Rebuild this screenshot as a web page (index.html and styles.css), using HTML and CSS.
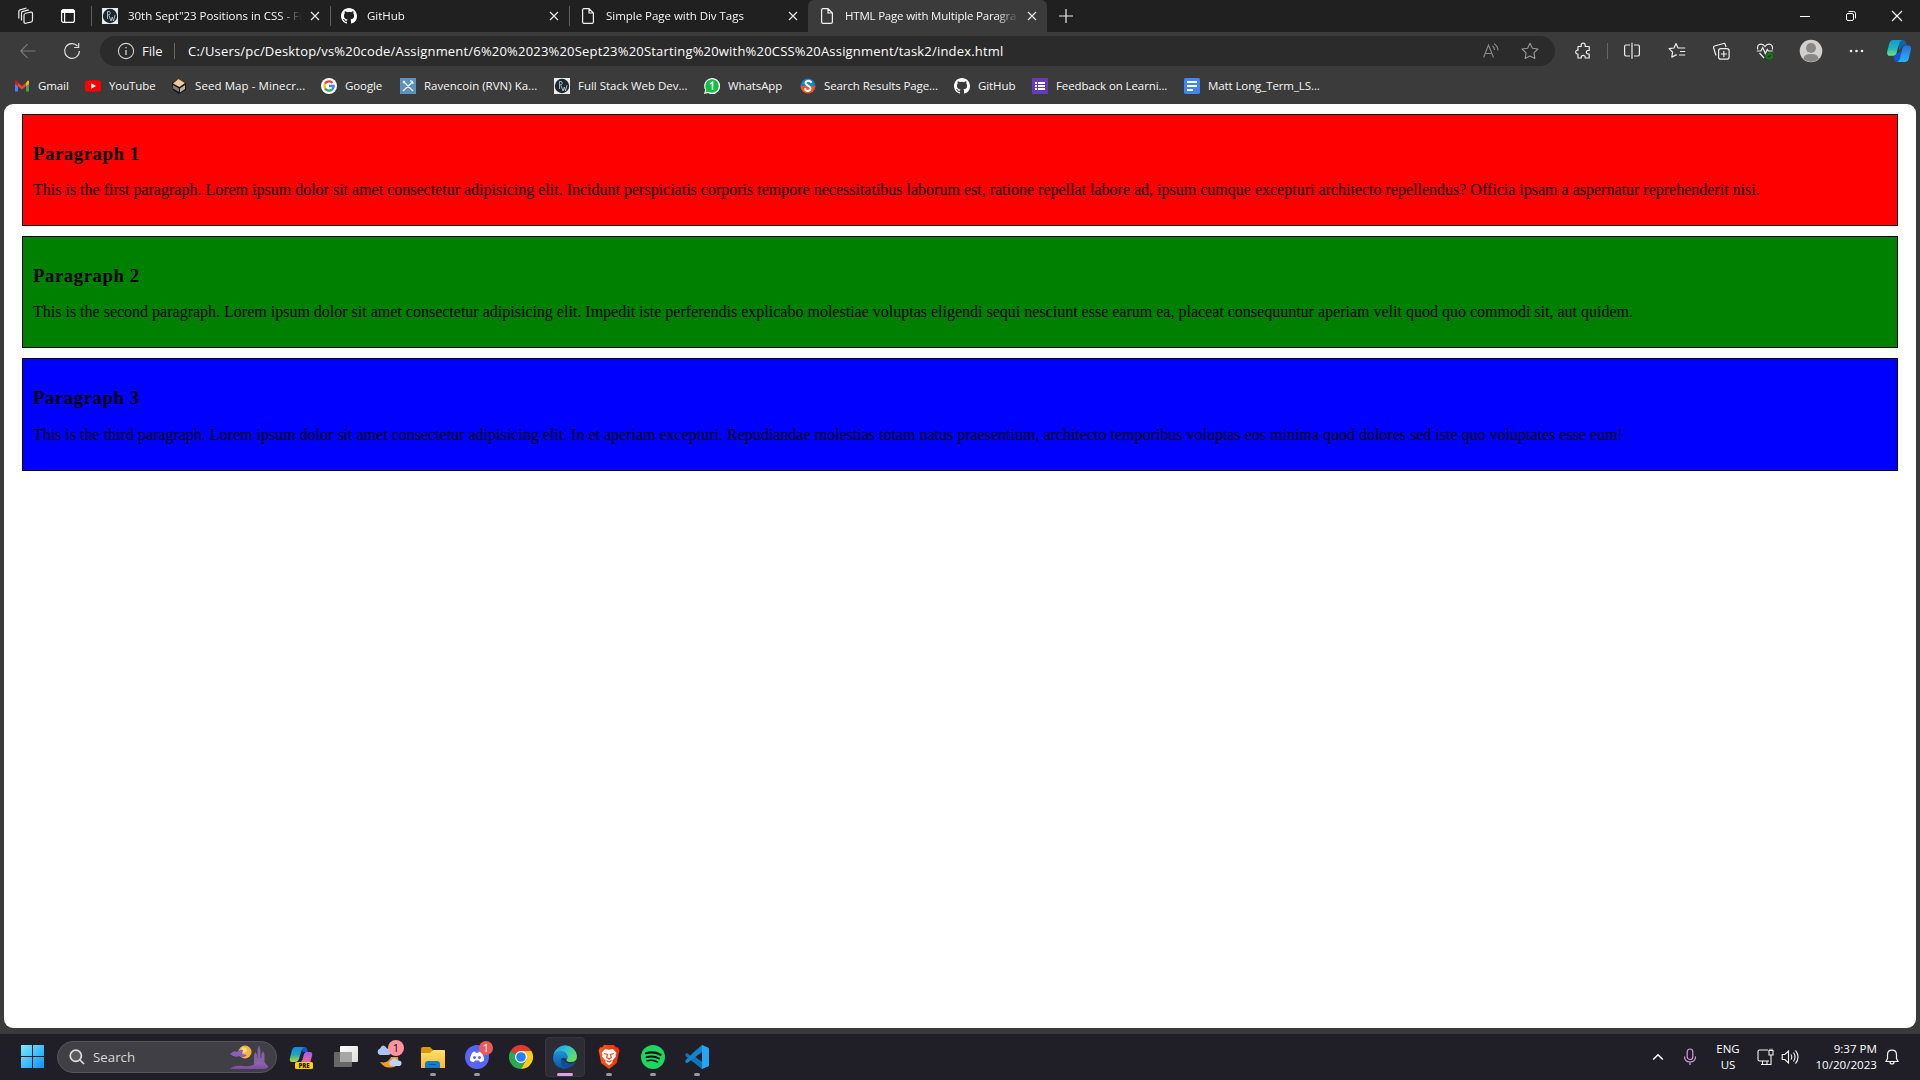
FILE: index.html
```html
<!DOCTYPE html>
<html lang="en">
<head>
<meta charset="utf-8">
<title>HTML Page with Multiple Paragraphs</title>
<link rel="stylesheet" href="styles.css">
</head>
<body>
<svg class="defs" width="0" height="0">
  <defs>
    <symbol id="close" viewBox="0 0 10 10"><path d="M1 1l8 8M9 1L1 9" fill="none" stroke="#e8e8e8" stroke-width="1.2"/></symbol>
    <symbol id="github" viewBox="0 0 16 16"><path fill="#fff" d="M8 0C3.58 0 0 3.58 0 8c0 3.54 2.29 6.53 5.47 7.59.4.07.55-.17.55-.38 0-.19-.01-.82-.01-1.49-2.01.37-2.53-.49-2.69-.94-.09-.23-.48-.94-.82-1.13-.28-.15-.68-.52-.01-.53.63-.01 1.08.58 1.23.82.72 1.21 1.87.87 2.33.66.07-.52.28-.87.51-1.07-1.78-.2-3.64-.89-3.64-3.95 0-.87.31-1.59.82-2.15-.08-.2-.36-1.02.08-2.12 0 0 .67-.21 2.2.82a7.6 7.6 0 0 1 4 0c1.53-1.04 2.2-.82 2.2-.82.44 1.1.16 1.92.08 2.12.51.56.82 1.27.82 2.15 0 3.07-1.87 3.75-3.65 3.95.29.25.54.73.54 1.48 0 1.07-.01 1.93-.01 2.2 0 .21.15.46.55.38A8 8 0 0 0 16 8c0-4.42-3.58-8-8-8z"/></symbol>
    <symbol id="pw" viewBox="0 0 16 16"><path fill="#e9eded" d="M0 0h16v16H0z"/><circle cx="8" cy="8" r="7.2" fill="#1d2730"/><path d="M5.500 11V3.500q3-.5 2.800 1.800Q8 7 6 6.800M7 7.500l2 5.500 1.300-4 1.200 4 1.500-6" fill="none" stroke="#b9c4c8" stroke-width=".9"/></symbol>
    <symbol id="doc" viewBox="0 0 12 16"><path d="M2 .6h5l4.400 4.400v9q0 1.400-1.400 1.400H2Q.6 15.400.6 14V2Q.6.6 2 .6zM7 .8V5h4.200" fill="none" stroke="#f2f2f2" stroke-width="1.200"/></symbol>
  </defs>
</svg>

<header class="tabs">
  <div class="tabs-tools">
    <svg width="18" height="18" viewBox="0 0 18 18" fill="none" stroke="#eee" stroke-width="1.200"><rect x="7" y="5.500" width="8.500" height="10" rx="1.800" transform="skewY(-12) translate(0 2.600)"/><path d="M4.500 13.500V6.200q0-1.400 1.300-1.800l6-1.600M1.800 11.600V4.600q0-1.400 1.300-1.800L9.500 1"/></svg>
    <svg width="16" height="16" viewBox="0 0 16 16" fill="none" stroke="#fff" stroke-width="1.200"><rect x="1.600" y="1.600" width="12.800" height="12.800" rx="2"/><path d="M1.600 3.500h12.800" stroke-width="3"/><path d="M4.600 5v9.400"/></svg>
  </div>
  <div class="tab"><svg width="16" height="16"><use href="#pw"/></svg><span class="tab-title">30th Sept"23 Positions in CSS - Fu</span><svg width="10" height="10"><use href="#close"/></svg></div>
  <div class="tab"><svg width="16" height="16"><use href="#github"/></svg><span class="tab-title">GitHub</span><svg width="10" height="10"><use href="#close"/></svg></div>
  <div class="tab"><svg width="16" height="16"><use href="#doc"/></svg><span class="tab-title">Simple Page with Div Tags</span><svg width="10" height="10"><use href="#close"/></svg></div>
  <div class="tab active"><svg width="16" height="16"><use href="#doc"/></svg><span class="tab-title long">HTML Page with Multiple Paragra</span><svg width="10" height="10"><use href="#close"/></svg></div>
  <svg class="plus" width="14" height="14" viewBox="0 0 14 14"><path d="M7 0v14M0 7h14" stroke="#eee" stroke-width="1.200"/></svg>
  <div class="window-buttons">
    <svg width="46" height="32" viewBox="0 0 46 32"><path d="M18 16.500h10" stroke="#fff"/></svg>
    <svg width="46" height="32" viewBox="0 0 46 32" fill="none" stroke="#fff"><rect x="18.500" y="13.500" width="7" height="7" rx="1.500"/><path d="M20.500 11.500h5q2 0 2 2v5"/></svg>
    <svg width="46" height="32" viewBox="0 0 46 32"><path d="M18 11l10 10M28 11L18 21" stroke="#fff" stroke-width="1.100"/></svg>
  </div>
</header>

<nav class="toolbar">
  <svg class="back" width="16" height="16" viewBox="0 0 16 16" fill="none" stroke="#7b7b7b" stroke-width="1.100"><path d="M15.500 8H1M7.500 1.200L.8 8l6.700 6.800"/></svg>
  <svg class="reload" width="18" height="18" viewBox="0 0 18 18" fill="none" stroke="#ddd" stroke-width="1.200"><path d="M16.400 9A7.400 7.400 0 1 1 14.500 4M15.700 1v4.500h-4.600"/></svg>
  <div class="address">
    <svg width="18" height="18" viewBox="0 0 18 18" fill="none" stroke="#d0d0d0" stroke-width="1.100"><circle cx="9" cy="9" r="7.600"/><path d="M9 8v5M9 5v1.300" stroke-width="1.300"/></svg>
    <span class="scheme">File</span><i class="rule"></i>
    <span class="url">C:/Users/pc/Desktop/vs%20code/Assignment/6%20%2023%20Sept23%20Starting%20with%20CSS%20Assignment/task2/index.html</span>
    <svg class="aloud" width="16" height="16" viewBox="0 0 16 16" fill="none" stroke="#8a8a8a" stroke-width="1.100"><path d="M.6 14.500L5.500 2l5 12.500M2.400 10.500H9M9.500 3q2 1.500 2 4M11 .8q4 2.500 4 6.700"/></svg>
    <svg width="18" height="18" viewBox="0 0 18 18" fill="none" stroke="#999" stroke-width="1.100"><path d="M9 1.200l2.400 5 5.500.8-4 3.900 1 5.600L9 13.900l-4.900 2.600 1-5.600-4-3.900 5.500-.8z" stroke-linejoin="round"/></svg>
  </div>
  <div class="tools">
    <svg width="18" height="18" viewBox="0 0 18 18" fill="none" stroke="#eee" stroke-width="1.200"><path d="M4 4.500h3.200V3.200a2 2 0 0 1 4 0v1.300h4v4h-1.100a1.700 1.700 0 0 0 0 3.500h1.100v4h-4v-.7a1.900 1.900 0 0 0-3.900 0v.7H4v-4H3a2 2 0 0 1 0-3.800h1z" stroke-linejoin="round"/></svg>
    <i class="rule"></i>
    <svg width="18" height="18" viewBox="0 0 18 18" fill="none" stroke="#eee" stroke-width="1.200"><path d="M7 3H3Q1.600 3 1.600 4.400v8.200Q1.600 14 3 14h4M11 3h4q1.400 0 1.400 1.400v8.200Q16.400 14 15 14h-4M9 .8v16"/></svg>
    <svg width="18" height="18" viewBox="0 0 18 18" fill="none" stroke="#eee" stroke-width="1.200"><path d="M10.500 6h6.700M12 9.500h5.200M11 13h6.200M10.500 6H10L8 1.500 6 6l-4.900.7 3.500 3.500-.8 5 4.200-2.300.8.400" stroke-linejoin="round"/></svg>
    <svg width="18" height="18" viewBox="0 0 18 18" fill="none" stroke="#eee" stroke-width="1.200"><rect x="6.600" y="6.600" width="10.500" height="10.500" rx="2.200"/><path d="M11.850 9v6M8.850 12h6M14 5l-.8-2.600q-.4-1.200-1.600-.9L2.500 4q-1.300.4-.9 1.700L4 13.500"/></svg>
    <svg width="18" height="18" viewBox="0 0 18 18" fill="none" stroke="#eee" stroke-width="1.200"><path d="M1.600 7.500Q.9 2.200 5 2.200q2.500 0 4 2.300 1.500-2.300 4-2.300 4.100 0 3.400 5.300M.8 9h4l2-3.500 2.500 6 2-4 1 1.500h4.500M3.500 11L8 16"/><circle cx="13.500" cy="14" r="3.600" fill="#127c12" stroke="none"/><path d="M12 14l1 1 2-2" stroke="#073f07"/></svg>
    <svg width="24" height="24" viewBox="0 0 24 24"><circle cx="12" cy="12" r="11.300" fill="#d2d0ce"/><circle cx="12" cy="9" r="5" fill="#8a8886"/><path d="M4.500 20q0-5 7.500-5t7.500 5Q16 23 12 23t-7.500-3z" fill="#8a8886"/></svg>
    <svg width="18" height="18" viewBox="0 0 18 18" fill="#eee"><circle cx="4" cy="9" r="1.300"/><circle cx="9.500" cy="9" r="1.300"/><circle cx="15" cy="9" r="1.300"/></svg>
    <svg width="24" height="24" viewBox="0 0 24 24"><defs><linearGradient id="ca" x2="0" y2="1"><stop stop-color="#0c9ddb"/><stop offset=".55" stop-color="#22b6b8"/><stop offset="1" stop-color="#6ee67a"/></linearGradient><linearGradient id="cb" x2="0" y2="1"><stop stop-color="#2a6fdc"/><stop offset="1" stop-color="#20b7fb"/></linearGradient></defs><path d="M12 1h4q2 0 2.600 2l1 3.500H16L12 12z" fill="#0a68a8"/><path d="M6 14h5l3-2v7q-.6 4-3 4H9.500Q7.600 23 7 20z" fill="#1855c8"/><path d="M6 1h9q-2 .5-2.800 3.500L9.500 14q-.8 2.800-3.500 2.800H3Q-.6 16.800.3 12l2-7.500Q3.400 1 6 1z" fill="url(#ca)"/><path d="M18 23H10q2.200-.7 3-3.500L15.200 10q.8-3.500 3.500-3.500h2.500q3.600 0 2.600 4.500l-2 8.500Q20.700 23 18 23z" fill="url(#cb)"/></svg>
  </div>
</nav>

<nav class="bookmarks">
  <a class="w1"><svg width="16" height="16" viewBox="0 0 16 16"><path d="M1 4v9.500h3V7" fill="#4285f4"/><path d="M12 7v6.500h3V4" fill="#34a853"/><path d="M1 2.500L8 8l7-5.500V6l-7 5.500L1 6z" fill="#ea4335"/><path d="M12 5l1.500-2.300Q15 2 15 4v2l-3 2z" fill="#fbbc04"/><path d="M1 6V3.500q.5-1.500 2-.6l1 .9V8z" fill="#c5221f"/></svg><span>Gmail</span></a>
  <a class="w2"><svg width="16" height="16" viewBox="0 0 16 16"><rect y="2.200" width="16" height="11.600" rx="3" fill="#f00"/><path d="M6.300 5.300v5.400L11 8z" fill="#fff"/></svg><span>YouTube</span></a>
  <a class="w3"><svg width="16" height="16" viewBox="0 0 16 16"><path d="M1 5l7-4 7 4v7l-7 4-6-4z" fill="#181510"/><path d="M2 5.500L7.500 1 14 5 8.500 9z" fill="#f6c896"/><path d="M2 7l6 3.500V14l-6-3.500z" fill="#777d82"/><path d="M9 10.500L14 7v4l-5 3.500z" fill="#b7b1a7"/></svg><span>Seed Map - Minecr...</span></a>
  <a class="w4"><svg width="16" height="16" viewBox="0 0 16 16"><circle cx="8" cy="8" r="8" fill="#fff"/><g fill="none" stroke-width="2.300"><path d="M4 5.700A4.700 4.700 0 0 1 11.500 4.900" stroke="#ea4335"/><path d="M4 5.700a4.700 4.700 0 0 0 0 4.600" stroke="#fbbc05"/><path d="M4 10.300a4.700 4.700 0 0 0 7 1.300" stroke="#34a853"/><path d="M11 11.600A4.700 4.700 0 0 0 12.700 8H8" stroke="#4285f4"/></g></svg><span>Google</span></a>
  <a class="w5"><svg width="16" height="16" viewBox="0 0 16 16"><path d="M0 0h16v16H0z" fill="#5e92bd"/><path d="M3 3l10 10M12.500 4L3 13M10 3q3-.5 3 3M3 5l2-2" fill="none" stroke="#e4eff6" stroke-width="1.300"/></svg><span>Ravencoin (RVN) Ka...</span></a>
  <a class="w6"><svg width="16" height="16"><use href="#pw"/></svg><span>Full Stack Web Dev...</span></a>
  <a class="w7"><svg width="16" height="16" viewBox="0 0 16 16"><path d="M0 16l1.200-4A8 8 0 1 1 4 14.900z" fill="#fff"/><circle cx="8" cy="8" r="6.800" fill="#12c143"/><path d="M1.500 14.500l1-3.500L5 13.600z" fill="#12c143"/><path d="M6 5.800L8.500 4.300V12" fill="none" stroke="#fff" stroke-width="1.500"/></svg><span>WhatsApp</span></a>
  <a class="w8"><svg width="16" height="16" viewBox="0 0 16 16"><path d="M.5 8a7.500 7.500 0 0 1 15 0z" fill="#1682c7"/><path d="M.5 8a7.500 7.500 0 0 0 15 0z" fill="#ee5526"/><path d="M10.800 5V3.800Q8 1.700 5.700 4q-.7 2 2.300 3.700 3.700 2 2 4.300-2.300 2-4.700-.3V10" fill="none" stroke="#fff" stroke-width="2"/></svg><span>Search Results Page...</span></a>
  <a class="w9"><svg width="16" height="16"><use href="#github"/></svg><span>GitHub</span></a>
  <a class="w10"><svg width="16" height="16" viewBox="0 0 16 16"><rect width="16" height="16" rx=".8" fill="#673ab7"/><path d="M3 5h2M3 8h2M3 11h2M6 5h7M6 8h7M6 11h7" stroke="#fff" stroke-width="1.800"/></svg><span>Feedback on Learni...</span></a>
  <a class="w11"><svg width="16" height="16" viewBox="0 0 16 16"><rect width="16" height="16" rx="1.800" fill="#4285f4"/><path d="M3 4h10M3 8h10M3 12h6" stroke="#fff" stroke-width="2"/></svg><span>Matt Long_Term_LS...</span></a>
</nav>

<div class="frame">
  <main class="page">
    <div class="para red"><h3>Paragraph 1</h3><p>This is the first paragraph. Lorem ipsum dolor sit amet consectetur adipisicing elit. Incidunt perspiciatis corporis tempore necessitatibus laborum est, ratione repellat labore ad, ipsum cumque excepturi architecto repellendus? Officia ipsam a aspernatur reprehenderit nisi.</p></div>
    <div class="para green"><h3>Paragraph 2</h3><p>This is the second paragraph. Lorem ipsum dolor sit amet consectetur adipisicing elit. Impedit iste perferendis explicabo molestiae voluptas eligendi sequi nesciunt esse earum ea, placeat consequuntur aperiam velit quod quo commodi sit, aut quidem.</p></div>
    <div class="para blue"><h3>Paragraph 3</h3><p>This is the third paragraph. Lorem ipsum dolor sit amet consectetur adipisicing elit. In et aperiam excepturi. Repudiandae molestias totam natus praesentium, architecto temporibus voluptas eos minima quod dolores sed iste quo voluptates esse eum!</p></div>
  </main>
</div>

<footer class="taskbar">
  <svg class="start" width="23" height="23" viewBox="0 0 23 23"><defs><linearGradient id="win" x2="1" y2="1"><stop stop-color="#7eeaff"/><stop offset="1" stop-color="#0795f8"/></linearGradient></defs><path d="M0 0h11v11H0zM12 0h11v11H12zM0 12h11v11H0zM12 12h11v11H12z" fill="url(#win)"/></svg>
  <div class="search">
    <svg width="16" height="16" viewBox="0 0 16 16" fill="none" stroke="#ddd" stroke-width="1.700"><circle cx="6.800" cy="6.800" r="5.600" fill="#5a5a60"/><path d="M11 11l4 4"/></svg>
    <span>Search</span>
    <svg class="castle" width="40" height="26" viewBox="0 0 40 26"><defs><linearGradient id="cs" x2="0" y2="1"><stop stop-color="#8f6aae"/><stop offset="1" stop-color="#7d4aa8"/></linearGradient></defs><circle cx="16" cy="8" r="6.500" fill="#f5b63c"/><circle cx="15" cy="6" r="2.800" fill="#fbd98a"/><path d="M1 10q4-4 7-2 2-3 6-2l-1 4 5 1q-4 4-8 1-4 2-9-2z" fill="#8a62b5"/><path d="M25 21V11l1.500-3 1.500 3v3h.500V6L30 1l1.500 5v8h.700l.3-4 1.500-3 1.500 3v8l4 5H18q5 0 7-2z" fill="#8661a5"/><path d="M1 25q4-4 13-3t13-3 12 5l-4 1z" fill="url(#cs)"/></svg>
  </div>
  <div class="apps">
    <div class="app"><svg width="26" height="26" viewBox="0 0 26 26"><defs><linearGradient id="pa" x2="0" y2="1"><stop stop-color="#1285ee"/><stop offset=".5" stop-color="#22a6b4"/><stop offset="1" stop-color="#b8d83b"/></linearGradient><linearGradient id="pb" x2="0" y2="1"><stop stop-color="#a55cf1"/><stop offset="1" stop-color="#f16b8d"/></linearGradient></defs><path d="M12 3h4q2 0 3 5h-5z" fill="#1b54c5"/><path d="M6 3h9q-2 1-3 5l-2 7q-1 3-4 3H3q-3 0-2-4l2-8q1-3 3-3z" fill="url(#pa)"/><path d="M17 8h4q3 0 2 4l-2 7H10q3-1 4-5 1-6 3-6z" fill="url(#pb)"/><rect x="6" y="18" width="18" height="7" rx="1.500" fill="#ffcf10"/><text x="15" y="24" class="pre">PRE</text></svg></div>
    <div class="app"><svg width="26" height="26" viewBox="0 0 26 26"><defs><linearGradient id="tv" x2="1" y2="1"><stop stop-color="#fff"/><stop offset="1" stop-color="#dcdcdc"/></linearGradient></defs><rect x="1" y="8" width="18" height="15" rx="1" fill="#686868"/><rect x="7" y="2" width="18" height="16" rx="1" fill="url(#tv)"/><path d="M7 8h12v10H7z" fill="#a7a7a7"/></svg></div>
    <div class="app"><svg width="28" height="28" viewBox="0 0 28 28"><path d="M5 19q8 2 11-5l7 0q2 11-8 10.500-6 .5-10-5.500z" fill="#f59a23"/><path d="M5 12a3.400 3.400 0 0 1 0-6.500q3-6 7 0 4 0 4 3.300T13 12z" fill="#a9c6f2"/><path d="M16 23a3 3 0 0 1 0-5.500q4-5 6.500 0 4-.5 4 2.700 0 2.800-3 2.800z" fill="#bcd4fa"/></svg><b class="badge pink">1</b></div>
    <div class="app run"><svg width="24" height="24" viewBox="0 0 24 24"><defs><linearGradient id="fo" x2="0" y2="1"><stop stop-color="#ffe070"/><stop offset="1" stop-color="#fbb92c"/></linearGradient></defs><path d="M0 4q0-2 2-2h7l3 3-3 5H0z" fill="#d89a08"/><path d="M0 8h9l3-3h11q1 0 1 1v17H0z" fill="url(#fo)"/><path d="M4 23v-4q0-3 3-3h9q3 0 3 3v4z" fill="#147bd0"/><path d="M8 19h7v1H8z" fill="#0a559b"/></svg></div>
    <div class="app run"><svg width="24" height="24" viewBox="0 0 24 24"><circle cx="12" cy="12" r="12" fill="#5865f2"/><path d="M8 7l2-.5.8 1.200h2.400L14 6.500l2 .5q3 3 3 8.500-2 1.700-3.800 1.700L14 15.600h-4l-1.200 1.600Q7 17.200 5 15.500 5 10 8 7z" fill="#fff"/><ellipse cx="9.500" cy="12.500" rx="1.400" ry="1.600" fill="#5865f2"/><ellipse cx="14.500" cy="12.500" rx="1.400" ry="1.600" fill="#5865f2"/></svg><b class="badge red-badge">1</b></div>
    <div class="app"><svg width="24" height="24" viewBox="0 0 24 24"><path d="M12 12L1.600 6A12 12 0 0 1 22.400 6z" fill="#e33b2e"/><path d="M12 12L1.600 6A12 12 0 0 0 12 24l5.200-9z" fill="#2da94f"/><path d="M12 6h10.400A12 12 0 0 1 12 24l5.200-9z" fill="#fdcb1a"/><circle cx="12" cy="12" r="6" fill="#fff"/><circle cx="12" cy="12" r="4.800" fill="#2680f4"/></svg></div>
    <div class="app run current"><svg width="24" height="24" viewBox="0 0 24 24"><defs><linearGradient id="e1" x2="1" y2=".6"><stop stop-color="#1795df"/><stop offset=".5" stop-color="#2fc2d7"/><stop offset="1" stop-color="#60e15a"/></linearGradient><linearGradient id="e2" x2="0" y2="1"><stop stop-color="#1b92dd"/><stop offset="1" stop-color="#0a55a6"/></linearGradient></defs><path d="M.3 10A12 12 0 0 1 24 11q0 6-6 6-5 0-4.500-2.500Q15 13 14 10 9 3 .3 10z" fill="url(#e1)"/><path d="M0 12Q1 6 8 6q6 0 6.500 6l-1.300 2Q8 11 8 16q1 6 8 6.500-3 1.500-6 1.300Q0 22 0 12z" fill="url(#e2)"/><path d="M8 16q-1 6 7 7 5-1 8-6-9 4-13-3-2 0-2 2z" fill="#154b9a"/></svg></div>
    <div class="app run"><svg width="24" height="24" viewBox="0 0 24 24"><defs><linearGradient id="br"><stop stop-color="#ff5a1b"/><stop offset="1" stop-color="#f32b09"/></linearGradient></defs><path d="M7 0h10l2 2.500 2-.2L22.500 6l-.7 2-2 10-7.800 6-7.800-6-2-10-.7-2L3 2.300l2 .2z" fill="url(#br)"/><path d="M8 4l4 .8L16 4l3.500 4-1 1.500.5 2-3.500 4v2L12 20.500 8.500 17.500v-2L5 11.500l.5-2-1-1.500z" fill="#fff"/><path d="M7 8.500l3.500 1-.8 3L12 14l2.300-1.500-.8-3L17 8.500M9.500 15.500L12 17l2.500-1.500M12 13v2" fill="none" stroke="#fb4616" stroke-width="1.200"/></svg></div>
    <div class="app run"><svg width="24" height="24" viewBox="0 0 24 24"><circle cx="12" cy="12" r="12" fill="#1ed760"/><g fill="none" stroke="#111" stroke-linecap="round"><path d="M5 8.200q8-2 14.500 1.500" stroke-width="2.200"/><path d="M5.500 12.200q7-2 12.500 1.300" stroke-width="1.900"/><path d="M6 15.800q6-1.600 10.500 1.200" stroke-width="1.500"/></g></svg></div>
    <div class="app run"><svg width="24" height="24" viewBox="0 0 24 24"><path d="M17 0L6 11 2 8 .4 9v2L17 24V17L6.500 9" fill="#0d75bd"/><path d="M17 7L2 18.300l-1.600-1v-2L17 0z" fill="#1384cf"/><path d="M17 0l6 2.600q1 .5 1 1.500v16q0 1-1 1.500L17 24z" fill="#28a5f2"/></svg></div>
  </div>
  <div class="tray">
    <svg width="12" height="12" viewBox="0 0 12 12"><path d="M1.200 8.500L6 3.800l4.800 4.700" fill="none" stroke="#fff" stroke-width="1.500"/></svg>
    <svg class="mic" width="14" height="18" viewBox="0 0 14 18" fill="none" stroke="#d69bdc" stroke-width="1.200"><rect x="4.200" y="1" width="5.600" height="10.500" rx="2.800"/><path d="M1.500 8.500q0 5.500 5.500 5.500t5.500-5.500M7 14v3"/></svg>
    <div class="lang"><span>ENG</span><span>US</span></div>
    <svg class="net" width="18" height="18" viewBox="0 0 18 18" fill="none" stroke="#f4f4f4" stroke-width="1.100"><path d="M11 2H2.500Q1 2 1 3.500v8Q1 13 2.500 13h9.500M4 16.500h9M5.500 13v3.500M10 13v3.500M12 2.500V7h4V2.500zM13 .8v1.700M15 .8v1.700M14 7v9.500h-2"/></svg>
    <svg class="vol" width="18" height="16" viewBox="0 0 18 16" fill="none" stroke="#f4f4f4" stroke-width="1.100"><path d="M1.200 5.500h2.600L7.500 2v12l-3.700-3.500H1.200zM10 5.500q1.500 2.500 0 5M12.500 3.500q3 4.500 0 9M14.500 1.300q5 6.700 0 13.400"/></svg>
    <div class="clock"><span>9:37 PM</span><span>10/20/2023</span></div>
    <svg class="bell" width="14" height="16" viewBox="0 0 14 16" fill="none" stroke="#f4f4f4" stroke-width="1.200"><path d="M2.500 9.500V6q0-4.800 4.500-4.800T11.500 6v3.500l1.600 3H.9zM5 13q0 2 2 2t2-2"/></svg>
  </div>
</footer>
</body>
</html>
```
FILE: styles.css
```css
* { box-sizing: border-box; }
body {
  margin: 0;
  width: 1920px;
  height: 1080px;
  overflow: hidden;
  display: flex;
  flex-direction: column;
  background: #3b3b3b;
  color: #f5f5f5;
  font: 12px/16px "Open Sans", "Noto Sans", sans-serif;
}
svg { flex: none; display: block; }
.defs { position: absolute; }
span { white-space: nowrap; }

.tabs { display: flex; flex: none; height: 32px; background: #202020; align-items: center; }
.tabs-tools { display: flex; align-items: center; width: 91px; padding-left: 17px; gap: 25px; }
.tab { display: flex; align-items: center; width: 239px; height: 32px; padding: 0 9px 0 11px; position: relative; }
.tab::before { content: ""; width: 1px; height: 20px; background: #606060; position: absolute; left: 0; top: 6px; }
.tab-title { width: 176px; margin: 0 6px 0 10px; overflow: hidden; font-size: 11.500px; letter-spacing: -.03px; -webkit-mask-image: linear-gradient(90deg, #000 86%, transparent 99%); mask-image: linear-gradient(90deg, #000 86%, transparent 99%); }
.long { letter-spacing: -.2px; }
.active { background: #3b3b3b; border-radius: 6px 6px 0 0; }
.active::before { display: none; }
.plus { margin-left: 12px; }
.window-buttons { display: flex; margin-left: auto; }

.toolbar { display: flex; flex: none; height: 38px; align-items: center; }
.back { margin-left: 20px; }
.reload { margin-left: 27px; }
.address { display: flex; align-items: center; width: 1455px; height: 30px; margin-left: 19px; padding: 0 16px 0 17px; border-radius: 15px; background: #2b2b2b; font-size: 13px; }
.scheme { width: 22px; margin-left: 7px; }
.rule { width: 1px; height: 16px; background: #666; }
.address .rule { margin-left: 10px; }
.url { margin-left: 13px; color: #fff; letter-spacing: .19px; }
.aloud { margin-left: auto; margin-right: 22px; }
.tools { display: flex; align-items: center; margin-left: 19px; }
.tools .rule { margin: 0 15px; }
.tools svg + svg { margin-left: 26px; }
.tools svg:nth-of-type(3) { margin-left: 27px; }
.tools svg:nth-of-type(6) { margin-left: 25px; }
.tools svg:nth-of-type(7) { margin-left: 24px; }
.tools svg:nth-of-type(8) { margin-left: 22px; }

.bookmarks { display: flex; flex: none; height: 34px; padding: 0 0 2px 14px; align-items: center; }
.bookmarks a { display: flex; gap: 8px; font-size: 11.500px; letter-spacing: -.1px; }
.bookmarks .w3 { letter-spacing: .08px; }
.bookmarks .w5 { letter-spacing: .01px; }
.bookmarks .w6 { letter-spacing: -.02px; }
.w1 { width: 71px; } .w2 { width: 86px; } .w3 { width: 150px; } .w4 { width: 79px; }
.w5 { width: 154px; } .w6 { width: 150px; } .w7 { width: 96px; } .w8 { width: 154px; }
.w9 { width: 78px; } .w10 { width: 152px; } .w11 { width: 150px; }

.frame { flex: none; height: 929px; padding: 0 4px 5px; }
.page { height: 924px; padding: 10px 18px; background: #fff; border-radius: 9px; color: #000; font: 16px "Liberation Serif", "Times New Roman", serif; }
.para { height: 112px; margin-bottom: 10px; padding: 29px 10px 0; border: 1px solid #000; }
.para h3 { margin: 0 0 17px; font-size: 18.720px; line-height: 20px; letter-spacing: .58px; }
.para p { margin: 0; line-height: 18px; white-space: nowrap; }
.red { background: #f00; }
.green { background: #008000; }
.blue { height: 113px; background: #00f; }
.blue h3 { margin-bottom: 18px; }

.taskbar { display: flex; flex: none; height: 47px; align-items: center; padding-bottom: 1px; background: #201f27; border-top: 1px solid #38373d; }
.start { margin-left: 21px; }
.search { display: flex; align-items: center; width: 220px; height: 32px; margin-left: 13px; padding: 0 7px 0 11px; border: 1px solid #56555b; border-radius: 16px; background: #403f45; color: #d8d8d8; font-size: 13.300px; }
.search span { margin-left: 8px; }
.castle { margin-left: auto; }
.apps { display: flex; gap: 4px; margin-left: 4px; }
.app { position: relative; display: flex; align-items: center; justify-content: center; width: 40px; height: 40px; border-radius: 4px; }
.app:first-child, .app:nth-child(2) { margin-left: 1px; margin-right: -1px; }
.run::after { content: ""; position: absolute; bottom: 1px; left: 17px; width: 6px; height: 3px; border-radius: 2px; background: #99989c; }
.current { background: #2d2c34; border: 1px solid #37363d; }
.current::after { left: 11px; bottom: 0; width: 16px; background: #dfa0e4; }
.badge { position: absolute; display: flex; align-items: center; justify-content: center; top: 3px; left: 19px; width: 16px; height: 16px; border-radius: 50%; font-size: 11px; font-weight: 400; }
.pink { background: #ff93a0; color: #111; }
.red-badge { top: 4px; left: 22px; width: 14px; height: 14px; background: #ee5a5a; color: #fff; }
.pre { font: 800 6px "Open Sans", sans-serif; text-anchor: middle; fill: #211a00; }
.tray { display: flex; align-items: center; margin-left: auto; padding-right: 21px; color: #fff; }
.mic { margin-left: 19px; }
.lang { display: flex; flex-direction: column; align-items: center; width: 28px; margin-left: 17px; font-size: 11.500px; }
.net { margin-left: 15px; }
.vol { margin-left: 6px; }
.clock { display: flex; flex-direction: column; align-items: flex-end; width: 66px; margin-left: 12px; font-size: 11.600px; }
.bell { margin-left: 8px; }
```
